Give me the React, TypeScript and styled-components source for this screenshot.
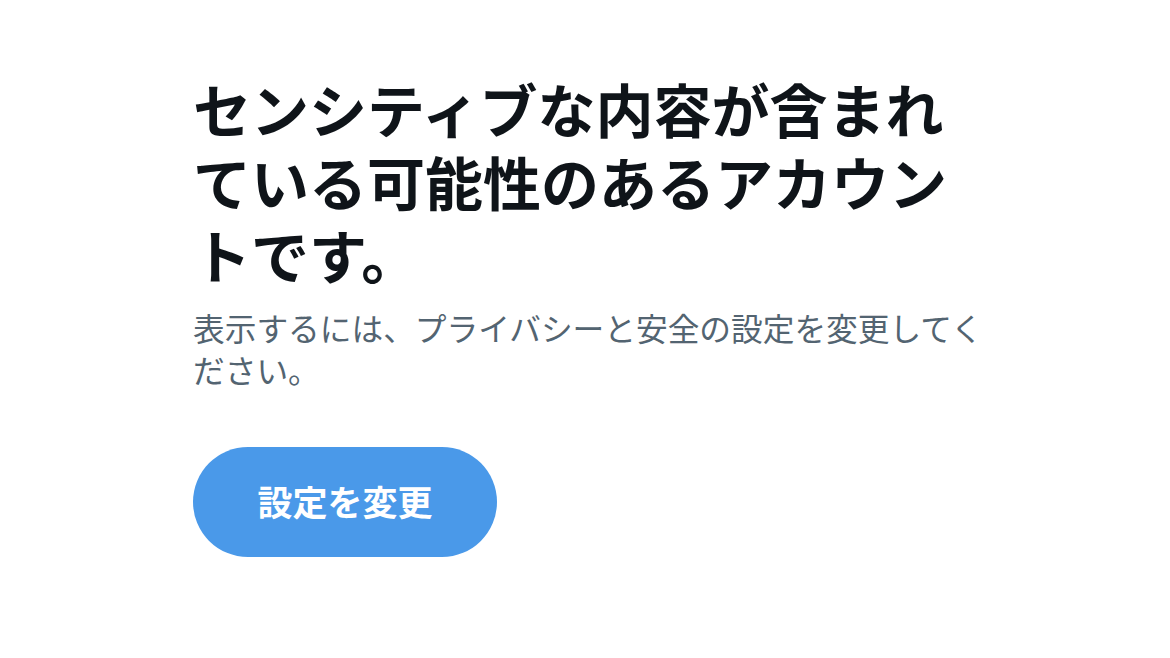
import React from "react";
import styled, { createGlobalStyle } from "styled-components";

const Global = createGlobalStyle`
  html, body { margin: 0; padding: 0; background: #ffffff; }
  body { font-family: "Noto Sans CJK JP", "Noto Sans", sans-serif; }
`;

const Page = styled.main`
  display: flex;
  justify-content: flex-start;
  padding: 72px 0 0 193px;
  min-height: 658px;
  box-sizing: border-box;
`;

const Content = styled.section`
  width: 800px;
  display: flex;
  flex-direction: column;
  align-items: flex-start;
`;

const Title = styled.h1`
  margin: 0;
  font-size: 58px;
  line-height: 73px;
  font-weight: 700;
  color: #0f1419;
  letter-spacing: 0;
`;

const Subtitle = styled.p`
  margin: 15px 0 0;
  font-size: 31.7px;
  line-height: 42px;
  font-weight: 400;
  color: #536471;
`;

const Button = styled.button`
  margin-top: 57px;
  width: 304px;
  height: 110px;
  padding: 0 0 3px;
  border: none;
  border-radius: 55px;
  background: #4a99e9;
  color: #ffffff;
  font-family: inherit;
  font-size: 35px;
  font-weight: 700;
  cursor: pointer;
`;

export default function App() {
  return (
    <>
      <Global />
      <Page>
        <Content>
          <Title>センシティブな内容が含まれている可能性のあるアカウントです。</Title>
          <Subtitle>表示するには、プライバシーと安全の設定を変更してください。</Subtitle>
          <Button>設定を変更</Button>
        </Content>
      </Page>
    </>
  );
}
